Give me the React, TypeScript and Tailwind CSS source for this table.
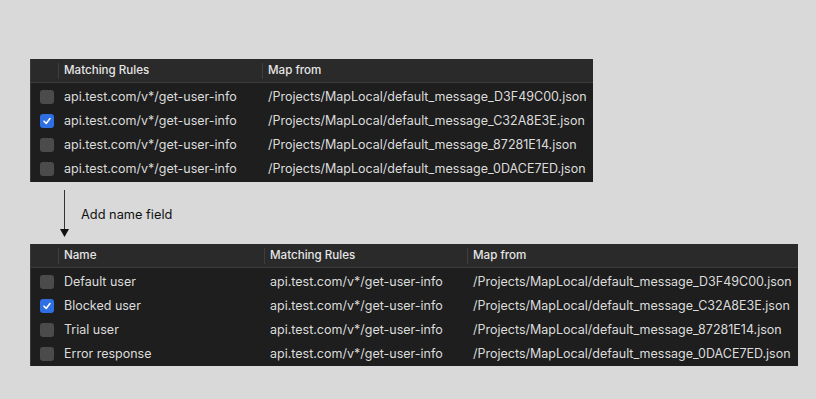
import React from 'react';

type Row = { checked: boolean; cells: string[] };

const RULE = 'api.test.com/v*/get-user-info';
const FILES = [
    '/Projects/MapLocal/default_message_D3F49C00.json',
    '/Projects/MapLocal/default_message_C32A8E3E.json',
    '/Projects/MapLocal/default_message_87281E14.json',
    '/Projects/MapLocal/default_message_0DACE7ED.json',
];
const NAMES = ['Default user', 'Blocked user', 'Trial user', 'Error response'];

const Checkbox: React.FC<{ checked: boolean }> = ({ checked }) =>
    checked ? (
        <span className="w-[14px] h-[14px] rounded-[3px] bg-[#2f6fe4] flex items-center justify-center">
            <svg width="10" height="10" viewBox="0 0 10 10">
                <path d="M2 5.2 L4.2 7.4 L8 2.6" fill="none" stroke="white" strokeWidth="1.6" strokeLinecap="round" strokeLinejoin="round" />
            </svg>
        </span>
    ) : (
        <span className="w-[14px] h-[14px] rounded-[3px] bg-[#4b4b4b]" />
    );

interface TableProps {
    headers: string[];
    widths: number[];
    rows: Row[];
    width: number;
    padTop: string;
}

const Table: React.FC<TableProps> = ({ headers, widths, rows, width, padTop }) => (
    <div className="bg-[#1e1e1e] border-l border-[#3a3a3a]" style={{ width }}>
        <div className="flex h-[24px] bg-[#2a2a2a] border-b border-[#3b3b3b] text-[11.6px] text-[#e6e6e6] font-medium">
            <div className="w-[28px] shrink-0 flex items-center justify-end">
                <span className="w-px h-[16px] bg-[#3e3e3e]" />
            </div>
            {headers.map((h, i) => (
                <div key={h} className="flex items-center shrink-0" style={{ width: widths[i] }}>
                    <span className="pl-[5px] flex-1">{h}</span>
                    {i < headers.length - 1 && <span className="w-px h-[16px] bg-[#3e3e3e]" />}
                </div>
            ))}
        </div>
        <div className={padTop}>
            {rows.map((r, idx) => (
                <div key={idx} className="flex h-[24px] items-center text-[12.5px] text-[#dcdcdc]">
                    <div className="w-[28px] shrink-0 flex items-center justify-end pr-[5px]">
                        <Checkbox checked={r.checked} />
                    </div>
                    {r.cells.map((c, i) => (
                        <div key={i} className="shrink-0 pl-[5px] whitespace-nowrap" style={{ width: widths[i] }}>
                            {c}
                        </div>
                    ))}
                </div>
            ))}
        </div>
    </div>
);

const App: React.FC = () => {
    const rows1: Row[] = FILES.map((f, i) => ({ checked: i === 1, cells: [RULE, f] }));
    const rows2: Row[] = FILES.map((f, i) => ({ checked: i === 1, cells: [NAMES[i], RULE, f] }));

    return (
        <div className="w-[816px] h-[399px] bg-[#d9d9d9] pl-[30px] pt-[59px] font-['Inter','Liberation_Sans',sans-serif]">
            <Table headers={['Matching Rules', 'Map from']} widths={[204, 330]} rows={rows1} width={563} padTop="pt-[2px] pb-[1px]" />
            <div className="flex h-[62px] items-stretch">
                <div className="w-[35px] flex flex-col items-end pt-[8px] pb-[7px]">
                    <div className="flex flex-col items-center h-full mr-[-4px]">
                        <div className="w-px flex-1 bg-[#333]" />
                        <svg width="9" height="8" viewBox="0 0 9 8">
                            <path d="M0 0 L9 0 L4.5 8 Z" fill="#111" />
                        </svg>
                    </div>
                </div>
                <div className="pl-[16px] pt-[23px] text-[12.8px] text-[#111]">Add name field</div>
            </div>
            <Table headers={['Name', 'Matching Rules', 'Map from']} widths={[206, 203, 330]} rows={rows2} width={768} padTop="pt-[2px]" />
        </div>
    );
};

export default App;
